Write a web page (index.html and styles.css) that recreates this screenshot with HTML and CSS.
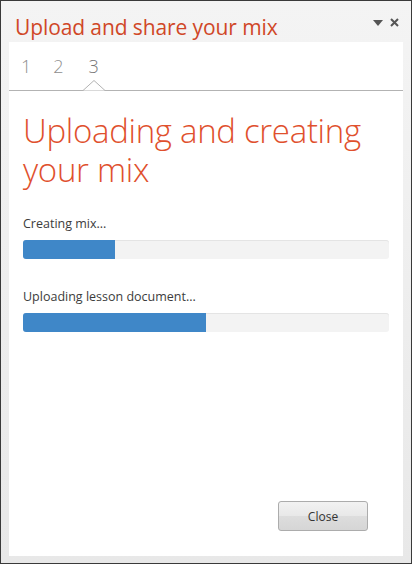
FILE: index.html
```html
<!DOCTYPE html>
<html lang="en">
<head>
    <meta charset="UTF-8">
    <title>Upload and share your mix</title>
    <link rel="stylesheet" href="styles.css">
</head>
<body>
    <div class="window">
        <header class="titlebar">
            <h1>Upload and share your mix</h1>
            <div class="controls">
                <svg width="10" height="6" viewBox="0 0 10 6"><path d="M0 0H10L5 6Z" fill="#555"/></svg>
                <svg width="9" height="9" viewBox="0 0 9 9"><path d="M1 1L8 8M8 1L1 8" stroke="#555" stroke-width="2"/></svg>
            </div>
        </header>
        <main class="panel">
            <nav class="steps">
                <span class="step">1</span>
                <span class="step">2</span>
                <span class="step current">3
                    <svg class="notch" width="22" height="11" viewBox="0 0 22 11"><path d="M0 10.5L11 0.5L22 10.5" fill="#fff" stroke="#b3b3b3"/></svg>
                </span>
            </nav>
            <section class="content">
                <h2>Uploading and creating your mix</h2>
                <div class="task">
                    <p>Creating mix...</p>
                    <div class="bar"><div class="fill" style="width: 25%"></div></div>
                </div>
                <div class="task">
                    <p>Uploading lesson document...</p>
                    <div class="bar"><div class="fill" style="width: 50%"></div></div>
                </div>
            </section>
            <footer class="actions">
                <button class="close-btn">Close</button>
            </footer>
        </main>
    </div>
</body>
</html>
```

FILE: styles.css
```css
body {
    margin: 0;
    font-family: "Open Sans", "Noto Sans", sans-serif;
}
.window {
    width: 412px;
    height: 564px;
    box-sizing: border-box;
    border: 1px solid #3a3a3a;
    background: linear-gradient(#f4f4f4, #e8e8e8);
    display: flex;
    flex-direction: column;
}
.titlebar {
    height: 41px;
    display: flex;
    align-items: flex-end;
    justify-content: space-between;
    padding: 0 12px 0 14px;
}
.titlebar h1 {
    margin: 0 0 1px 0;
    font-size: 21px;
    font-weight: 400;
    color: #d04727;
    line-height: 28px;
    letter-spacing: -0.1px;
}
.controls {
    display: flex;
    align-items: center;
    gap: 7px;
    align-self: flex-start;
    margin-top: 17px;
}
.panel {
    flex: 1;
    margin: 0 8px 7px 8px;
    background: #fff;
    display: flex;
    flex-direction: column;
}
.steps {
    height: 48px;
    border-bottom: 1px solid #b3b3b3;
    display: flex;
    align-items: flex-start;
    padding-left: 12px;
    gap: 22px;
}
.step {
    position: relative;
    font-size: 18px;
    color: #8e8e8e;
    line-height: 20px;
    margin-top: 14px;
    font-weight: 300;
}
.step.current {
    color: #767676;
    margin-left: 3px;
}
.notch {
    position: absolute;
    left: -6px;
    top: 24px;
}
.content {
    flex: 1;
    padding: 0 14px;
}
.content h2 {
    margin: 20px 0 0 0;
    font-size: 33px;
    font-weight: 300;
    line-height: 39px;
    color: #e0502d;
    letter-spacing: -0.3px;
}
.task {
    margin-top: 26px;
}
.task + .task {
    margin-top: 29px;
}
.task p {
    margin: 0 0 8px 0;
    font-size: 12.5px;
    line-height: 17px;
    color: #3c3c3c;
}
.bar {
    height: 19px;
    background: #f3f3f3;
    border-radius: 3px;
    box-shadow: inset 0 1px 0 #e4e4e4;
    overflow: hidden;
}
.fill {
    height: 100%;
    background: #3f87c8;
}
.actions {
    display: flex;
    justify-content: flex-end;
    padding: 0 35px 25px 0;
}
.close-btn {
    width: 90px;
    height: 30px;
    font-family: "Open Sans", "Noto Sans", sans-serif;
    font-size: 12px;
    color: #333;
    border: 1px solid #acacac;
    border-radius: 3px;
    background: linear-gradient(#f2f2f2, #e8e8e8 50%, #dddddd 51%, #d6d6d6);
}
```
